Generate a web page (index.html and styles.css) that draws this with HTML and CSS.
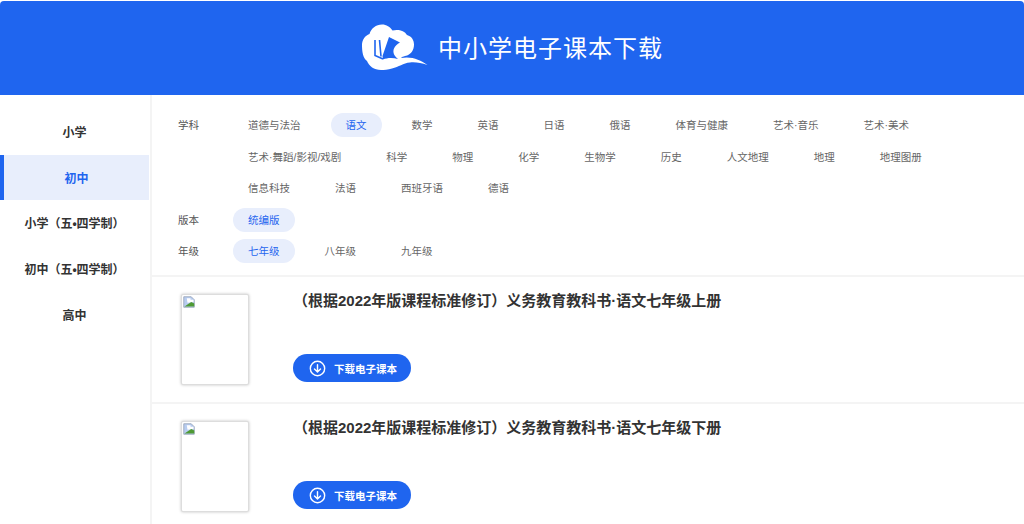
FILE: index.html
```html
<!DOCTYPE html>
<html lang="zh-CN">
<head>
<meta charset="utf-8">
<title>中小学电子课本下载</title>
<link rel="stylesheet" href="styles.css">
</head>
<body>
<header class="hero">
  <svg class="logo" viewBox="7 9 67 48" width="67" height="48" aria-hidden="true">
    <path fill="#fff" d="M8 30C8 25 11 20.500 15.500 19C17 13.500 22 9.500 28 9.500C32.500 9.500 36 12 38.500 15.500C44 14 50.500 15.500 53 20C58 21.500 60 25.500 60 29.500C60 35 57 40 51 41C49 41.500 48 42 47 43C58 41 66 45 73.500 50C67 48 62 47 56 47.500C49 48 45 52 38 53.500C34 55 30 55 27 55C20 55 15 51 13 46C9 43 8 37 8 30Z"/>
    <path fill="#1f65ef" d="M35 22L46 27.500C43 29 41 31 40 33.500C38.500 37 40 41 44 44C38 42.500 33 43 29 44.500L28.500 41Z"/>
    <path fill="none" stroke="#1f65ef" stroke-width="1.600" d="M21 25V40.500L29 44M25.500 25L27 41.500"/>
  </svg>
  <h1 class="hero-title">中小学电子课本下载</h1>
</header>
<div class="layout">
  <nav class="side">
    <a class="side-item">小学</a>
    <a class="side-item is-active">初中</a>
    <a class="side-item">小学（五•四学制）</a>
    <a class="side-item">初中（五•四学制）</a>
    <a class="side-item">高中</a>
  </nav>
  <main class="content">
    <section class="filters">
      <div class="filter-row">
        <span class="filter-label">学科</span>
        <div class="tags">
          <span class="tag">道德与法治</span>
          <span class="tag is-on">语文</span>
          <span class="tag">数学</span>
          <span class="tag">英语</span>
          <span class="tag">日语</span>
          <span class="tag">俄语</span>
          <span class="tag">体育与健康</span>
          <span class="tag">艺术·音乐</span>
          <span class="tag">艺术·美术</span>
          <span class="tag">艺术·舞蹈/影视/戏剧</span>
          <span class="tag">科学</span>
          <span class="tag">物理</span>
          <span class="tag">化学</span>
          <span class="tag">生物学</span>
          <span class="tag">历史</span>
          <span class="tag">人文地理</span>
          <span class="tag">地理</span>
          <span class="tag">地理图册</span>
          <span class="tag">信息科技</span>
          <span class="tag">法语</span>
          <span class="tag">西班牙语</span>
          <span class="tag">德语</span>
        </div>
      </div>
      <div class="filter-row">
        <span class="filter-label">版本</span>
        <div class="tags"><span class="tag is-on">统编版</span></div>
      </div>
      <div class="filter-row">
        <span class="filter-label">年级</span>
        <div class="tags">
          <span class="tag is-on">七年级</span>
          <span class="tag">八年级</span>
          <span class="tag">九年级</span>
        </div>
      </div>
    </section>
    <article class="book">
      <div class="cover">
        <svg class="broken" viewBox="0 0 16 16" width="12" height="12" aria-hidden="true">
          <path fill="#b8cdf0" stroke="#8f9bb0" stroke-width="1" d="M1 1H11L15 5V15H1Z"/>
          <path fill="#fff" d="M5 3H10V5H14V8L6 9Z"/>
          <path fill="#4f9a34" d="M2 14L11 8L15 10V14Z"/>
        </svg>
      </div>
      <div class="book-body">
        <h2 class="book-title">（根据2022年版课程标准修订）义务教育教科书·语文七年级上册</h2>
        <a class="dl">
          <svg viewBox="0 0 18 18" width="17" height="17" aria-hidden="true">
            <circle cx="9" cy="9" r="7.600" fill="none" stroke="#fff" stroke-width="1.500"/>
            <path fill="none" stroke="#fff" stroke-width="1.500" stroke-linecap="round" stroke-linejoin="round" d="M9 5V12.500M5.800 9.500L9 12.700L12.200 9.500"/>
          </svg>
          <span>下载电子课本</span>
        </a>
      </div>
    </article>
    <article class="book">
      <div class="cover">
        <svg class="broken" viewBox="0 0 16 16" width="12" height="12" aria-hidden="true">
          <path fill="#b8cdf0" stroke="#8f9bb0" stroke-width="1" d="M1 1H11L15 5V15H1Z"/>
          <path fill="#fff" d="M5 3H10V5H14V8L6 9Z"/>
          <path fill="#4f9a34" d="M2 14L11 8L15 10V14Z"/>
        </svg>
      </div>
      <div class="book-body">
        <h2 class="book-title">（根据2022年版课程标准修订）义务教育教科书·语文七年级下册</h2>
        <a class="dl">
          <svg viewBox="0 0 18 18" width="17" height="17" aria-hidden="true">
            <circle cx="9" cy="9" r="7.600" fill="none" stroke="#fff" stroke-width="1.500"/>
            <path fill="none" stroke="#fff" stroke-width="1.500" stroke-linecap="round" stroke-linejoin="round" d="M9 5V12.500M5.800 9.500L9 12.700L12.200 9.500"/>
          </svg>
          <span>下载电子课本</span>
        </a>
      </div>
    </article>
  </main>
</div>
</body>
</html>
```
FILE: styles.css
```css
* { box-sizing: border-box; }
html, body { margin: 0; height: 100%; overflow: hidden; }
body {
  background: #fff;
  color: #333;
  font-family: "Liberation Sans", "Noto Sans CJK SC", sans-serif;
  padding-top: 1px;
}
.hero {
  height: 94px;
  background: #1f65ef;
  border-radius: 4px 4px 0 0;
  display: flex;
  align-items: center;
  justify-content: center;
  gap: 10px;
}
.logo { flex: none; }
.hero-title {
  margin: 2px 0 0;
  color: #fff;
  font-size: 24px;
  font-weight: 400;
  letter-spacing: 1px;
  line-height: 30px;
}
.layout { display: flex; height: 429px; }
.side {
  width: 152px;
  flex: none;
  padding: 14px 1px 0 0;
  border-right: 2px solid #f4f4f4;
}
.side-item {
  display: flex;
  align-items: center;
  justify-content: center;
  height: 45.700px;
  padding-bottom: 1px;
  font-size: 12px;
  font-weight: 700;
  color: #333;
}
.side-item.is-active {
  color: #1f65ef;
  background: #e8eefc;
  border-left: 4px solid #1f65ef;
}
.content { flex: 1; min-width: 0; }
.filters {
  padding: 18px 20px 12px 26px;
  border-bottom: 2px solid #f4f4f4;
  display: flex;
  flex-direction: column;
  gap: 7.500px;
}
.filter-row { display: flex; align-items: flex-start; }
.filter-label {
  width: 55px;
  flex: none;
  font-size: 10.500px;
  line-height: 24px;
  color: #555;
}
.tags { display: flex; flex-wrap: wrap; gap: 7.500px 15px; flex: 1; }
.tag {
  height: 24px;
  line-height: 24px;
  padding: 0 15px;
  border-radius: 12px;
  font-size: 10.500px;
  color: #666;
  white-space: nowrap;
}
.tag.is-on { background: #e8eefc; color: #1f65ef; }
.book {
  height: 127px;
  display: flex;
  padding: 17px 0 0 29px;
  border-bottom: 2px solid #f4f4f4;
}
.cover {
  width: 68px;
  height: 91px;
  flex: none;
  background: #fff;
  border: 1px solid #ddd;
  border-radius: 2px;
  box-shadow: 0 0 3px rgba(0, 0, 0, .25);
  padding: 1px;
}
.broken { display: block; }
.book-body {
  margin-left: 44px;
  display: flex;
  flex-direction: column;
  align-items: flex-start;
  height: 88px;
  justify-content: space-between;
}
.book-title {
  margin: -1px 0 0;
  font-size: 15px;
  font-weight: 700;
  line-height: 16px;
  color: #333;
}
.dl {
  display: flex;
  align-items: center;
  gap: 8px;
  height: 28px;
  width: 118px;
  padding-left: 16px;
  border-radius: 14px;
  background: #1f65ef;
  color: #fff;
  font-size: 10.500px;
  font-weight: 700;
}
```
